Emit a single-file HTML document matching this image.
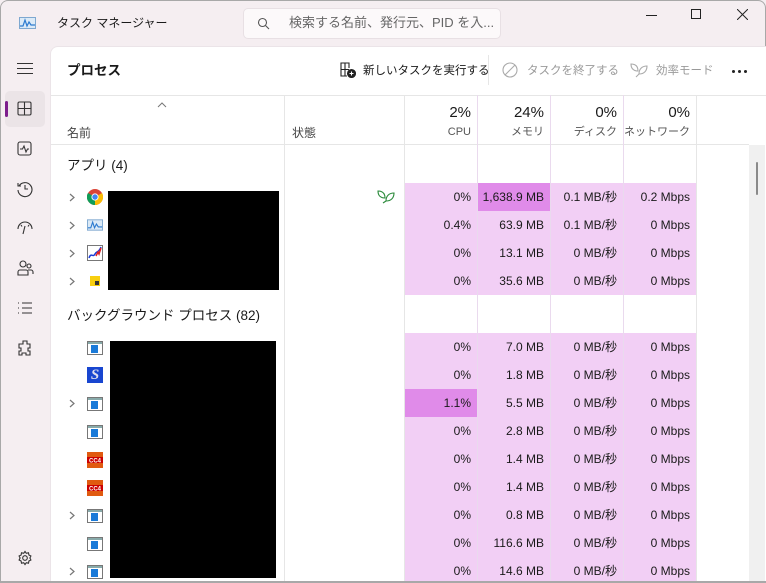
<!DOCTYPE html>
<html><head><meta charset="utf-8"><style>
*{margin:0;padding:0;box-sizing:border-box}
body{width:766px;height:583px;overflow:hidden;background:#f5eef1;font-family:"Liberation Sans","Noto Sans CJK JP",sans-serif;color:#1a1a1a;position:relative}
.a{position:absolute}
.win{left:0;top:0;width:766px;height:583px;border:1px solid #a8a8a8;border-radius:8px 8px 0 0;border-bottom:none}
.panel{left:50px;top:46px;width:716px;height:537px;background:#fff;border-radius:8px 0 0 0;border-top:1px solid #ebe4e8;border-left:1px solid #ebe4e8}
.t{font-size:13px;white-space:nowrap;line-height:18px}
.vl{width:1px;background:#e6e6e6;top:95px;height:488px}
.hl{height:1px;background:#e6e6e6}
.bg{background:#f2cff5}
.num{font-size:12px;text-align:right;white-space:nowrap;line-height:16px;height:16px}
.chev{width:6px;height:9px}
</style></head><body>
<div class="a win"></div>
<svg class="a" style="left:19px;top:17px" width="17" height="12" viewBox="0 0 17 12"><rect x=".5" y=".5" width="16" height="11" fill="#dbeaf7" stroke="#7ea8d0"/><path d="M1 9 L4 9 L6 3 L8 9 L10 5 L12 8 L16 8" fill="none" stroke="#2d7bd0" stroke-width="1.2"/></svg>
<div class="a t" style="left:57px;top:14px;font-size:12px">タスク マネージャー</div>
<div class="a" style="left:243px;top:8px;width:258px;height:31px;background:#fcf9fa;border:1px solid #e8e0e4;border-radius:5px"></div>
<svg class="a" style="left:257px;top:17px" width="13" height="13" viewBox="0 0 13 13"><circle cx="5.5" cy="5.5" r="4" fill="none" stroke="#555" stroke-width="1.1"/><path d="M8.5 8.5 L12 12" stroke="#555" stroke-width="1.1"/></svg>
<div class="a t" style="left:289px;top:14px;color:#666;font-size:13px">検索する名前、発行元、PID を入...</div>
<div class="a" style="left:646px;top:15px;width:11px;height:1px;background:#222"></div>
<div class="a" style="left:691px;top:9px;width:10px;height:10px;border:1px solid #222"></div>
<svg class="a" style="left:737px;top:9px" width="11" height="11"><path d="M0 0L11 11M11 0L0 11" stroke="#222" stroke-width="1"/></svg>
<!-- sidebar -->
<div class="a" style="left:17px;top:63px;width:16px;height:1.3px;background:#333;box-shadow:0 5px 0 #333,0 10px 0 #333"></div>
<div class="a" style="left:5px;top:91px;width:40px;height:36px;background:#ebe4e7;border-radius:5px"></div>
<div class="a" style="left:5px;top:101px;width:3px;height:16px;background:#7d1d8c;border-radius:2px"></div>
<svg class="a" style="left:17px;top:101px" width="16" height="16" viewBox="0 0 16 16" fill="none" stroke="#333" stroke-width="1.1"><rect x="1" y="1" width="13" height="13" rx="1.5"/><path d="M7.5 1v13M1 7.5h13"/></svg>
<svg class="a" style="left:17px;top:141px" width="16" height="16" viewBox="0 0 16 16" fill="none" stroke="#333" stroke-width="1.1"><rect x="1" y="1" width="13" height="13" rx="2"/><path d="M3 8h2.5l1.5-3 2 6 1.5-3H12"/></svg>
<svg class="a" style="left:16px;top:180px" width="18" height="18" viewBox="0 0 18 18" fill="none" stroke="#333" stroke-width="1.1"><path d="M3 6a7 7 0 1 1-1 4M2 3v3h3M9 5v4h3"/></svg>
<svg class="a" style="left:16px;top:220px" width="18" height="16" viewBox="0 0 18 16" fill="none" stroke="#333" stroke-width="1.1"><path d="M2 9a7 7 0 0 1 14 0M9 6l-2 8M5 5l1 1.5M13 5l-1 1.5"/></svg>
<svg class="a" style="left:16px;top:259px" width="18" height="18" viewBox="0 0 18 18" fill="none" stroke="#333" stroke-width="1.1"><circle cx="7" cy="5" r="3"/><circle cx="13" cy="7" r="2"/><path d="M2 16v-3a2 2 0 0 1 2-2h6a2 2 0 0 1 2 2v3zM12 11h3a2 2 0 0 1 2 2v2"/></svg>
<svg class="a" style="left:17px;top:301px" width="16" height="14" viewBox="0 0 16 14" stroke="#333" stroke-width="1.1"><path d="M1 2h1M5 2h10M1 7h1M5 7h10M1 12h1M5 12h10"/></svg>
<svg class="a" style="left:16px;top:339px" width="18" height="18" viewBox="0 0 18 18" fill="none" stroke="#333" stroke-width="1.1"><path d="M7 2h4v3h3v4h-2v3h2v4h-4v-2h-4v2H3v-4h2V9H3V5h4z"/></svg>
<svg class="a" style="left:17px;top:550px" width="16" height="16" viewBox="0 0 16 16" fill="none" stroke="#333" stroke-width="1.1"><circle cx="8" cy="8" r="2.3"/><path d="M8 1.5l1.3 1.8 2.2-.5.4 2.2 2 1-1 2 1 2-2 1-.4 2.2-2.2-.5L8 14.5l-1.3-1.8-2.2.5-.4-2.2-2-1 1-2-1-2 2-1 .4-2.2 2.2.5z"/></svg>
<!-- panel -->
<div class="a panel"></div>
<div class="a t" style="left:67px;top:62px;font-size:13.5px;font-weight:bold">プロセス</div>
<svg class="a" style="left:340px;top:62px" width="16" height="16" viewBox="0 0 16 16" fill="none" stroke="#222" stroke-width="1.1"><path d="M9 6V1H1v13h6M1 7.5h8M5 1v13"/><circle cx="11.5" cy="11.5" r="4" fill="#222"/><path d="M11.5 9.5v4M9.5 11.5h4" stroke="#fff"/></svg>
<div class="a t" style="left:363px;top:62px;font-size:11.5px">新しいタスクを実行する</div>
<div class="a" style="left:488px;top:55px;width:1px;height:30px;background:#e6e6e6"></div>
<svg class="a" style="left:502px;top:62px" width="16" height="16" viewBox="0 0 16 16" fill="none" stroke="#aaa" stroke-width="1.1"><circle cx="8" cy="8" r="7"/><path d="M3 13L13 3"/></svg>
<div class="a t" style="left:527px;top:62px;font-size:11.5px;color:#9a9a9a">タスクを終了する</div>
<svg class="a" style="left:630px;top:62px" width="18" height="16" viewBox="0 0 18 16" fill="none" stroke="#aaa" stroke-width="1.1"><path d="M1 2c4 0 7 2 7 7-4 0-7-2-7-7zM17 4c-5 0-8 3-8 8 5 0 8-3 8-8zM9 12l-3 3"/></svg>
<div class="a t" style="left:656px;top:62px;font-size:11.5px;color:#9a9a9a">効率モード</div>
<div class="a" style="left:732px;top:70px;width:3px;height:3px;background:#222;border-radius:2px;box-shadow:6px 0 0 #222,12px 0 0 #222"></div>
<div class="a hl" style="left:51px;top:95px;width:715px"></div>
<!-- headers -->
<svg class="a" style="left:157px;top:102px" width="10" height="6"><path d="M1 5l4-4 4 4" fill="none" stroke="#777"/></svg>
<div class="a t" style="left:67px;top:124px;font-size:12px;color:#444">名前</div>
<div class="a t" style="left:292px;top:124px;font-size:12px;color:#444">状態</div>
<div class="a num" style="left:404px;width:67px;top:104px;font-size:15px;height:18px;line-height:18px">2%</div>
<div class="a num" style="left:404px;width:67px;top:124px;font-size:11px;color:#555">CPU</div>
<div class="a num" style="left:477px;width:67px;top:104px;font-size:15px;height:18px;line-height:18px">24%</div>
<div class="a num" style="left:477px;width:67px;top:124px;font-size:11px;color:#555">メモリ</div>
<div class="a num" style="left:550px;width:67px;top:104px;font-size:15px;height:18px;line-height:18px">0%</div>
<div class="a num" style="left:550px;width:67px;top:124px;font-size:11px;color:#555">ディスク</div>
<div class="a num" style="left:623px;width:67px;top:104px;font-size:15px;height:18px;line-height:18px">0%</div>
<div class="a num" style="left:623px;width:67px;top:124px;font-size:11px;color:#555">ネットワーク</div>
<div class="a hl" style="left:51px;top:144px;width:698px"></div>
<!-- scrollbar -->
<div class="a" style="left:749px;top:145px;width:16px;height:438px;background:#f0f0f0"></div>
<div class="a" style="left:756px;top:162px;width:2px;height:33px;background:#8a8a8a;border-radius:1px"></div>
<!-- highlight backgrounds -->
<div class="a bg" style="left:404px;top:183px;width:292px;height:112px"></div>
<div class="a bg" style="left:404px;top:333px;width:292px;height:250px"></div>
<div class="a" style="left:477px;top:183px;width:73px;height:28px;background:#e08be9"></div>
<div class="a" style="left:404px;top:389px;width:73px;height:28px;background:#e08be9"></div>
<div class="a vl" style="left:284px"></div>
<div class="a vl" style="left:404px"></div>
<div class="a vl" style="left:477px;background:#eadaee"></div>
<div class="a vl" style="left:550px;background:#eadaee"></div>
<div class="a vl" style="left:623px;background:#eadaee"></div>
<div class="a vl" style="left:696px"></div>
<!-- sections -->
<div class="a t" style="left:67px;top:157px;font-size:13.5px">アプリ (4)</div>
<div class="a t" style="left:67px;top:307px;font-size:13.5px">バックグラウンド プロセス (82)</div>
<div class="a" style="left:108px;top:191px;width:171px;height:99px;background:#000"></div>
<div class="a" style="left:110px;top:341px;width:166px;height:237px;background:#000"></div>
<svg width="0" height="0" style="position:absolute"><defs><symbol id="ch" viewBox="0 0 6 9"><path d="M1 1l4 3.5L1 8" fill="none" stroke="#777" stroke-width="1.2"/></symbol><symbol id="w" viewBox="0 0 16 14"><rect x=".5" y=".5" width="15" height="13" fill="#fff" stroke="#777"/><rect x="1" y="1" width="14" height="2" fill="#8aa"/><rect x="4" y="4" width="7" height="8" fill="#1a7ad8"/></symbol><symbol id="c" viewBox="0 0 16 16"><rect x="0" y="0" width="16" height="16" fill="#e05a10"/><rect x="0" y="5" width="16" height="6" fill="#c00"/><text x="8" y="10.5" font-size="6" fill="#fff" text-anchor="middle" font-family="Liberation Sans" font-weight="bold">CC4</text></symbol></defs></svg>
<svg class="a chev" style="left:69px;top:193px"><use href="#ch"/></svg>
<svg class="a chev" style="left:69px;top:221px"><use href="#ch"/></svg>
<svg class="a chev" style="left:69px;top:249px"><use href="#ch"/></svg>
<svg class="a chev" style="left:69px;top:277px"><use href="#ch"/></svg>
<svg class="a chev" style="left:69px;top:399px"><use href="#ch"/></svg>
<svg class="a chev" style="left:69px;top:511px"><use href="#ch"/></svg>
<svg class="a chev" style="left:69px;top:567px"><use href="#ch"/></svg>
<svg class="a" style="left:87px;top:189px" width="16" height="16" viewBox="0 0 16 16"><circle cx="8" cy="8" r="8" fill="#db4437"/><path d="M8 8L1 4A8 8 0 0 0 8 16z" fill="#0f9d58"/><path d="M8 8L15 4A8 8 0 0 1 8 16z" fill="#fbbc05"/><circle cx="8" cy="8" r="3.6" fill="#fff"/><circle cx="8" cy="8" r="2.7" fill="#4285f4"/></svg>
<svg class="a" style="left:87px;top:219px" width="16" height="12" viewBox="0 0 17 12"><rect x=".5" y=".5" width="16" height="11" fill="#dbeaf7" stroke="#7ea8d0"/><path d="M1 9 L4 9 L6 3 L8 9 L10 5 L12 8 L16 8" fill="none" stroke="#2d7bd0" stroke-width="1.2"/></svg>
<svg class="a" style="left:87px;top:245px" width="16" height="16"><rect x=".5" y=".5" width="15" height="15" fill="#fff" stroke="#777"/><path d="M2 13c2-6 4 0 6-4s3 0 6-7" fill="none" stroke="#1a3cd8" stroke-width="1.5"/><path d="M9 11l2-4 1 2 2-6" fill="none" stroke="#e02020" stroke-width="1.5"/></svg>
<div class="a" style="left:90px;top:276px;width:10px;height:10px;background:#f8cf10"></div>
<div class="a" style="left:95px;top:281px;width:4px;height:4px;background:#333"></div>
<svg class="a" style="left:377px;top:190px" width="18" height="14" viewBox="0 0 18 14" fill="none" stroke="#2a8a3a" stroke-width="1.1"><path d="M1 1c4 0 7 2 7 7-4 0-7-2-7-7zM17 3c-5 0-8 3-8 8 5 0 8-3 8-8zM9 11l-3 2"/></svg>
<svg class="a" style="left:87px;top:341px" width="16" height="14"><use href="#w"/></svg>
<div class="a" style="left:87px;top:367px;width:16px;height:16px;background:#1846d0;color:#dde;font:italic bold 15px 'Liberation Serif',serif;text-align:center;line-height:16px">S</div>
<svg class="a" style="left:87px;top:397px" width="16" height="14"><use href="#w"/></svg>
<svg class="a" style="left:87px;top:425px" width="16" height="14"><use href="#w"/></svg>
<svg class="a" style="left:87px;top:452px" width="16" height="16"><use href="#c"/></svg>
<svg class="a" style="left:87px;top:480px" width="16" height="16"><use href="#c"/></svg>
<svg class="a" style="left:87px;top:509px" width="16" height="14"><use href="#w"/></svg>
<svg class="a" style="left:87px;top:537px" width="16" height="14"><use href="#w"/></svg>
<svg class="a" style="left:87px;top:565px" width="16" height="14"><use href="#w"/></svg>
<!-- numbers -->
<div class="a num" style="left:404px;width:67px;top:189px">0%</div><div class="a num" style="left:477px;width:67px;top:189px">1,638.9 MB</div><div class="a num" style="left:550px;width:67px;top:189px">0.1 MB/秒</div><div class="a num" style="left:623px;width:67px;top:189px">0.2 Mbps</div>
<div class="a num" style="left:404px;width:67px;top:217px">0.4%</div><div class="a num" style="left:477px;width:67px;top:217px">63.9 MB</div><div class="a num" style="left:550px;width:67px;top:217px">0.1 MB/秒</div><div class="a num" style="left:623px;width:67px;top:217px">0 Mbps</div>
<div class="a num" style="left:404px;width:67px;top:245px">0%</div><div class="a num" style="left:477px;width:67px;top:245px">13.1 MB</div><div class="a num" style="left:550px;width:67px;top:245px">0 MB/秒</div><div class="a num" style="left:623px;width:67px;top:245px">0 Mbps</div>
<div class="a num" style="left:404px;width:67px;top:273px">0%</div><div class="a num" style="left:477px;width:67px;top:273px">35.6 MB</div><div class="a num" style="left:550px;width:67px;top:273px">0 MB/秒</div><div class="a num" style="left:623px;width:67px;top:273px">0 Mbps</div>
<div class="a num" style="left:404px;width:67px;top:339px">0%</div><div class="a num" style="left:477px;width:67px;top:339px">7.0 MB</div><div class="a num" style="left:550px;width:67px;top:339px">0 MB/秒</div><div class="a num" style="left:623px;width:67px;top:339px">0 Mbps</div>
<div class="a num" style="left:404px;width:67px;top:367px">0%</div><div class="a num" style="left:477px;width:67px;top:367px">1.8 MB</div><div class="a num" style="left:550px;width:67px;top:367px">0 MB/秒</div><div class="a num" style="left:623px;width:67px;top:367px">0 Mbps</div>
<div class="a num" style="left:404px;width:67px;top:395px">1.1%</div><div class="a num" style="left:477px;width:67px;top:395px">5.5 MB</div><div class="a num" style="left:550px;width:67px;top:395px">0 MB/秒</div><div class="a num" style="left:623px;width:67px;top:395px">0 Mbps</div>
<div class="a num" style="left:404px;width:67px;top:423px">0%</div><div class="a num" style="left:477px;width:67px;top:423px">2.8 MB</div><div class="a num" style="left:550px;width:67px;top:423px">0 MB/秒</div><div class="a num" style="left:623px;width:67px;top:423px">0 Mbps</div>
<div class="a num" style="left:404px;width:67px;top:451px">0%</div><div class="a num" style="left:477px;width:67px;top:451px">1.4 MB</div><div class="a num" style="left:550px;width:67px;top:451px">0 MB/秒</div><div class="a num" style="left:623px;width:67px;top:451px">0 Mbps</div>
<div class="a num" style="left:404px;width:67px;top:479px">0%</div><div class="a num" style="left:477px;width:67px;top:479px">1.4 MB</div><div class="a num" style="left:550px;width:67px;top:479px">0 MB/秒</div><div class="a num" style="left:623px;width:67px;top:479px">0 Mbps</div>
<div class="a num" style="left:404px;width:67px;top:507px">0%</div><div class="a num" style="left:477px;width:67px;top:507px">0.8 MB</div><div class="a num" style="left:550px;width:67px;top:507px">0 MB/秒</div><div class="a num" style="left:623px;width:67px;top:507px">0 Mbps</div>
<div class="a num" style="left:404px;width:67px;top:535px">0%</div><div class="a num" style="left:477px;width:67px;top:535px">116.6 MB</div><div class="a num" style="left:550px;width:67px;top:535px">0 MB/秒</div><div class="a num" style="left:623px;width:67px;top:535px">0 Mbps</div>
<div class="a num" style="left:404px;width:67px;top:563px">0%</div><div class="a num" style="left:477px;width:67px;top:563px">14.6 MB</div><div class="a num" style="left:550px;width:67px;top:563px">0 MB/秒</div><div class="a num" style="left:623px;width:67px;top:563px">0 Mbps</div>
<div class="a" style="left:0;top:581px;width:766px;height:2px;background:#a8a8a8"></div>
</body></html>
